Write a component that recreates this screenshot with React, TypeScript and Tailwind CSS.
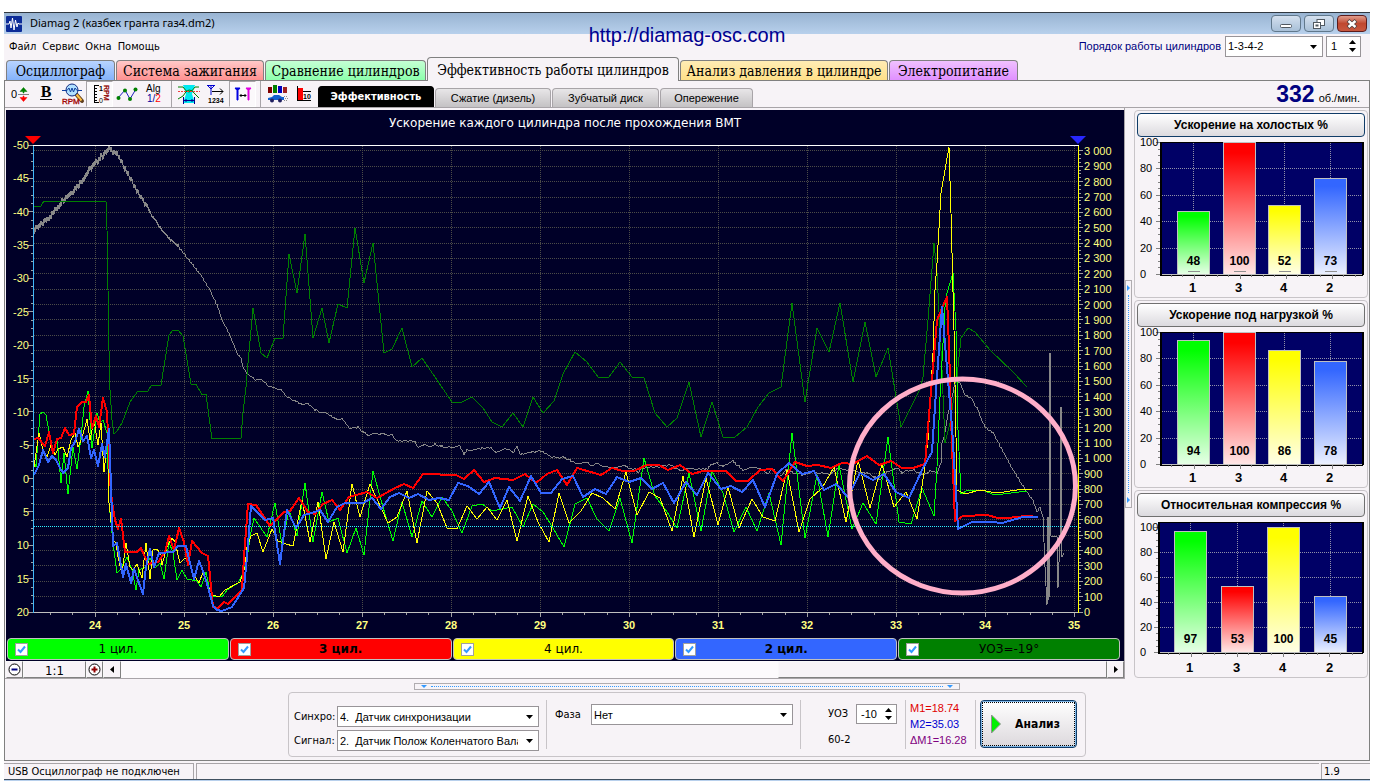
import { useState, type ReactNode } from 'react';
import clsx from 'clsx';

const X0 = 95.5;
const X_STEP = 89.05;
const Y_ZERO = 612.5;
const RPM_STEP = 15.37;

const RPM_TRACE =
  '33,232 43,223 53,213 63,200 77,187 88,172 100,158 110,149 117,155 127,173 137,192 147,208 160,228 170,240 180,248 184,254 193,265 200,274 209,288 218,307 222,320 230,335 237,353 241,358 243,368 248,374 255,379 263,380 267,385 273,387 281,390 287,397 295,400 300,404 308,403 315,410 327,413 337,419 342,418 349,428 358,427 363,432 368,435 373,433 392,435 395,440 415,441 418,447 427,444 432,447 435,444 440,446 452,447 460,446 464,454 467,450 490,447 496,452 508,448 513,452 517,447 520,454 533,452 540,451 553,457 563,457 578,464 588,462 592,466 596,462 602,466 613,468 625,466 635,469 638,473 642,468 660,466 670,465 682,471 687,468 707,469 710,465 717,463 723,466 733,461 743,470 752,467 762,469 767,474 772,468 780,477 787,469 795,473 803,475 813,471 818,473 830,474 838,468 847,470 867,473 880,480 887,472 897,468 902,473 907,470 913,470 925,475 930,470 937,473 941,462 942,443 945,433 948,413 950,407 955,382 960,383 965,395 970,397 977,408 985,427 993,433 1002,450 1013,470 1027,492 1033,500 1037,512 1040,507 1043,517';

const RPM_SPIKES =
  '1043,517 1045,567 1047,605 1048,517 1049,600 1050,353 1051,536 1057,536 1058,588 1060,537 1061,407 1062,557 1064,553';

const SERIES = [
  {
    id: 'uoz',
    color: '#008000',
    width: 1,
    points:
      '33,206 41,206 44,201 100,201 106,202 107,230 108,290 109,350 110,390 112,420 114,434 117,431 122,423 130,402 138,391 148,391 151,386 161,385 169,335 173,330 178,330 183,336 191,384 196,384 202,395 206,394 212,439 241,438 243,413 246,387 248,363 253,308 261,353 267,358 275,338 283,338 289,254 297,293 305,234 313,338 322,308 329,343 338,304 347,308 355,228 364,283 373,243 384,353 392,349 402,328 412,367 422,358 452,402 462,402 472,397 483,408 492,422 502,427 513,413 523,427 533,397 543,413 554,401 563,374 575,352 587,362 598,377 609,377 620,362 632,377 644,378 655,413 667,427 677,418 689,382 701,437 712,402 723,437 735,437 747,427 758,407 769,393 781,387 792,303 805,402 817,328 829,352 840,303 853,382 865,322 876,377 888,348 901,427 920,389 923,377 928,320 934,243 937,273 942,370 945,443 950,423 957,377 961,338 968,328 975,332 990,350 1013,372 1027,387',
  },
  {
    id: 'c1',
    color: '#00ff00',
    width: 1,
    points:
      '33,457 36,467 40,414 43,412 46,415 51,443 53,453 57,438 61,483 64,453 68,494 73,447 77,469 81,437 84,407 88,391 92,448 97,413 100,423 103,420 107,433 109,503 113,543 117,573 120,570 127,557 132,570 136,590 139,570 145,567 150,558 155,568 160,563 164,579 169,542 173,553 177,580 182,570 187,579 197,581 201,587 206,572 209,587 213,596 222,597 227,590 238,583 242,575 247,560 250,537 254,518 267,537 275,503 282,545 289,510 297,536 305,483 313,542 322,492 329,522 338,518 347,553 356,528 364,555 373,471 383,507 393,541 402,502 412,537 422,501 432,517 442,497 452,511 462,533 472,506 482,504 492,511 512,507 523,527 533,504 543,512 553,528 564,547 575,504 587,498 597,519 609,531 620,498 632,543 644,458 655,496 667,512 677,528 689,473 701,531 712,471 723,493 734,532 746,507 757,531 769,493 781,545 792,433 805,538 817,475 828,537 839,465 852,529 863,503 876,524 888,437 899,522 911,524 922,488 934,516 937,467 940,397 945,307 947,293 953,273 956,330 958,430 961,494 968,490 982,490 995,495 1027,491',
  },
  {
    id: 'c4',
    color: '#ffff00',
    width: 1,
    points:
      '34,467 39,433 43,450 47,457 51,445 55,455 58,449 63,447 67,457 71,440 75,433 78,447 82,438 87,419 90,440 94,420 98,445 101,423 104,472 108,437 109,503 113,540 116,543 118,557 122,574 126,543 130,567 133,570 137,564 142,578 146,543 150,579 153,550 157,549 161,555 162,565 167,547 172,538 175,542 180,563 185,558 189,562 193,573 199,583 203,572 208,587 213,595 219,597 225,590 240,582 245,567 247,547 251,536 257,533 263,552 272,529 278,541 286,544 293,546 302,500 310,542 318,502 326,559 334,522 343,552 352,484 360,517 370,484 388,523 397,517 407,491 417,543 427,491 437,503 447,528 457,529 467,506 477,519 487,507 497,520 507,500 517,541 528,496 538,522 549,542 559,493 569,523 581,511 592,493 603,498 615,509 626,472 637,515 649,492 660,498 672,531 683,476 694,537 706,478 718,525 728,487 739,528 752,499 763,517 775,521 787,470 799,532 810,499 822,488 834,467 846,522 858,460 870,508 882,464 894,507 906,492 917,519 924,473 928,440 933,353 935,290 937,263 941,193 949,147 951,213 954,330 957,490 965,494 980,490 997,493 1017,490 1032,489',
  },
  {
    id: 'c3',
    color: '#ff0000',
    width: 2,
    points:
      '34,439 38,438 45,446 49,432 53,453 57,439 61,438 65,428 69,435 74,434 77,407 82,402 86,402 89,395 92,428 96,416 99,427 103,398 107,412 110,480 112,502 115,520 118,529 121,519 125,552 137,552 141,548 148,564 158,562 165,552 169,536 174,550 179,528 184,542 188,565 192,541 202,553 208,556 213,607 218,608 224,602 228,604 242,590 244,557 248,504 256,505 270,526 284,512 290,511 299,498 308,512 315,514 323,504 332,500 340,510 349,497 367,492 377,498 395,488 404,484 413,488 423,474 456,475 464,479 474,470 484,482 495,478 513,480 525,474 536,483 547,474 557,470 567,485 577,468 601,475 612,468 623,471 634,471 647,465 659,465 668,470 680,465 692,474 703,471 726,471 736,481 748,481 760,470 772,469 783,481 795,462 807,466 818,465 831,468 842,463 853,464 867,456 879,465 891,461 902,468 913,468 925,464 928,427 932,380 937,320 947,297 949,347 952,447 955,521 963,516 987,515 998,518 1008,518 1025,516 1033,516',
  },
  {
    id: 'c2',
    color: '#3366ff',
    width: 2,
    points:
      '34,475 39,465 43,450 48,462 52,456 56,460 60,468 63,473 68,468 71,448 75,442 79,429 83,441 87,436 91,458 94,450 98,466 102,444 105,457 109,429 111,487 113,546 117,543 123,577 126,564 131,583 134,569 143,594 146,567 150,549 154,567 159,553 173,552 178,546 186,546 190,563 194,579 199,561 203,571 208,587 213,606 217,610 222,611 232,607 244,588 247,557 251,506 257,512 265,520 273,518 280,564 287,510 296,528 304,515 312,513 320,510 328,522 337,507 345,503 363,503 372,498 381,509 390,497 399,493 409,498 418,494 429,500 439,498 449,500 458,483 468,486 479,494 489,482 500,508 509,487 520,501 531,476 541,493 551,493 562,479 573,476 583,497 595,489 606,494 617,477 629,482 641,478 652,489 663,483 674,503 686,482 697,495 708,473 721,489 731,486 742,492 753,480 765,507 777,474 789,463 802,474 814,471 824,490 836,484 848,497 860,473 873,480 884,474 896,492 909,498 923,468 932,452 937,377 942,307 948,380 952,427 956,493 958,529 972,522 992,522 1002,523 1023,517 1038,517',
  },
];

const LEGEND = [
  { id: 'c1', label: '1 цил.', className: 'bg-[#00ff00]' },
  { id: 'c3', label: '3 цил.', className: 'bg-[#ff0000] font-bold' },
  { id: 'c4', label: '4 цил.', className: 'bg-[#ffff00]' },
  { id: 'c2', label: '2 цил.', className: 'bg-[#3366ff] font-bold' },
  { id: 'uoz', label: 'УОЗ=-19°', className: 'bg-[#008000]' },
];

const TABS = [
  { label: 'Осциллограф', className: 'w-[109px] from-[#b8d4ff] to-[#84b2fa]' },
  { label: 'Система зажигания', className: 'w-[148px] from-[#ffc8c8] to-[#ff9090]' },
  { label: 'Сравнение цилиндров', className: 'w-[161px] from-[#c4ffd4] to-[#8cffac]' },
  { label: 'Эффективность работы цилиндров', className: 'w-[252px]' },
  { label: 'Анализ давления в цилиндре', className: 'w-[208px] from-[#ffecb4] to-[#ffe088]' },
  { label: 'Электропитание', className: 'w-[129px] from-[#f0c0ff] to-[#e090ff]' },
];

const MODES = [
  { label: 'Эффективность', className: 'w-[116px]' },
  { label: 'Сжатие (дизель)', className: 'w-[116px]' },
  { label: 'Зубчатый диск', className: 'w-[107px]' },
  { label: 'Опережение', className: 'w-[93px]' },
];

const GAUGES = [
  { title: 'Ускорение на холостых %', values: [48, 100, 52, 73], left: 23, top: 5, hundred: 5, zero: 137, centers: [56.5, 102.5, 147.5, 193.5], marks: true },
  { title: 'Ускорение под нагрузкой %', values: [94, 100, 86, 78], left: 23, top: 5, hundred: 5, zero: 137, centers: [56.5, 102.5, 147.5, 193.5], marks: false },
  { title: 'Относительная компрессия %', values: [97, 53, 100, 45], left: 21, top: 5, hundred: 10, zero: 135, centers: [53.5, 100.5, 146.5, 193.5], marks: false },
];

const CYLINDERS = ['1', '3', '4', '2'];
const BAR_COLORS = ['#00ff00', '#ff0000', '#ffff00', '#3366ff'];

// The tachometer signal is noisy at high speed and calms down as rpm falls
function roughen(trace: string) {
  const pts = trace.split(' ').map(p => p.split(',').map(Number));
  const out: string[] = [];
  for (let i = 0; i < pts.length - 1; i++) {
    const [xa, ya] = pts[i];
    const [xb, yb] = pts[i + 1];
    for (let x = xa; x < xb; x++) {
      const y = ya + ((yb - ya) * (x - xa)) / (xb - xa);
      const noise = Math.sin(x * 12.9898) * 43758.5453;
      const unit = noise - Math.floor(noise);
      if (x < 180) {
        const amp = x < 150 ? 4 : 2;
        out.push(`${x},${Math.round(y - unit * amp)}`, `${x},${Math.round(y + (1 - unit) * amp)}`);
      } else {
        out.push(`${x},${Math.round(y + (unit - 0.5) * 2)}`);
      }
    }
  }
  out.push(pts[pts.length - 1].join(','));
  return out.join(' ');
}

const RPM_POINTS = roughen(RPM_TRACE);

function range(from: number, to: number) {
  return Array.from({ length: to - from + 1 }, (_, i) => from + i);
}

function formatRpm(v: number) {
  return v >= 1000 ? `${Math.floor(v / 1000)} ${String(v % 1000).padStart(3, '0')}` : String(v);
}

function MainChart({ hidden }: { hidden: string[] }) {
  return (
    <svg viewBox="6 110 1118 527" className="block h-auto w-full bg-[#000028] font-['Liberation_Sans',sans-serif]">
      <text x="565" y="127" textAnchor="middle" fontSize="12" fill="#fff" className="font-['DejaVu_Sans',sans-serif]">
        Ускорение каждого цилиндра после прохождения ВМТ
      </text>
      <g stroke="#4c4c48" strokeDasharray="1 1" shapeRendering="crispEdges">
        {range(1, 30).map(i => (
          <path key={i} d={`M34 ${Math.round(Y_ZERO - i * RPM_STEP) - 0.5}H1078`} />
        ))}
        {range(0, 11).map(i => (
          <path key={i} d={`M${Math.round(X0 + i * X_STEP) - 0.5} 146V612`} />
        ))}
      </g>
      <g shapeRendering="crispEdges" stroke="#a0a0a0">
        {range(0, 56).map(i => (
          <path key={i} d={`M${i % 4 === 0 ? 28 : 31} ${Math.round(145.5 + i * 8.34) - 0.5}H33`} />
        ))}
        {range(-2, 44).map(i => (
          <path key={i} d={`M${Math.round(X0 + (i * X_STEP) / 4) - 0.5} 612v${i % 4 === 0 ? 5 : 3}`} />
        ))}
        {range(0, 120).map(i => (
          <path key={i} d={`M1079 ${Math.round(Y_ZERO - (i * RPM_STEP) / 4) - 0.5}h${i % 4 === 0 ? 4 : 2}`} />
        ))}
      </g>
      <g fill="none" shapeRendering="crispEdges" strokeLinejoin="round">
        <polyline points={RPM_POINTS} stroke="#888" />
        <polyline points={RPM_SPIKES} stroke="#888" strokeLinejoin="bevel" />
        {SERIES.filter(s => !hidden.includes(s.id)).map(s => (
          <polyline key={s.id} points={s.points} stroke={s.color} strokeWidth={s.width} />
        ))}
        <path d="M34 526.5H1078" stroke="#30f0ff" strokeDasharray="1 1" />
        <path d="M33 145.5H1079" stroke="#fff" />
        <path d="M33 612.5H1079" stroke="#c0c0c0" />
        <path d="M33.5 146V613" stroke="#40b8f8" />
        <path d="M1078.5 146V613" stroke="#ffff00" />
      </g>
      <ellipse cx="962.5" cy="486" rx="113" ry="107" fill="none" stroke="#ffaec9" strokeWidth="5" />
      <path d="M25 136H41L33 144Z" fill="#f00" />
      <path d="M1070 136H1086L1078 144Z" fill="#2828ff" />
      <g fontSize="11" fill="#ffff80">
        {range(0, 14).map(i => (
          <text key={i} x="29" y={149 + Math.round(i * 33.36)} textAnchor="end">{i * 5 - 50}</text>
        ))}
        {range(0, 30).map(i => (
          <text key={i} x="1084" y={616 - Math.round(i * RPM_STEP)}>{formatRpm(i * 100)}</text>
        ))}
      </g>
      <g fontSize="11" fontWeight="bold" fill="#ffff80" textAnchor="middle">
        {range(24, 35).map(v => (
          <text key={v} x={Math.round(X0 - 1 + (v - 24) * X_STEP)} y="629">{v}</text>
        ))}
      </g>
    </svg>
  );
}

function Gauge({ title, values, left, top, hundred, zero, centers, marks, index }: (typeof GAUGES)[number] & { index: number }) {
  const scale = (zero - hundred) / 100;
  return (
    <section className="rounded border border-[#c8c4c8] px-0.5 pt-0.5">
      <button
        className={clsx(
          "block h-6 w-full rounded-sm border bg-linear-to-b from-white to-[#dcdadf] text-center font-['Liberation_Sans',sans-serif] text-xs font-bold",
          index === 0 ? 'border-[#103c68]' : 'border-[#707070]',
        )}
      >
        {title}
      </button>
      <svg viewBox="0 0 228 160" className="block h-auto w-full font-['Liberation_Sans',sans-serif]">
        <defs>
          {BAR_COLORS.map((c, i) => (
            <linearGradient key={c} id={`bar-${index}-${i}`} x1="0" x2="0" y1="0" y2="1">
              <stop offset="0.08" stopColor={c} />
              <stop offset="1" stopColor={c} stopOpacity="0.1" />
            </linearGradient>
          ))}
        </defs>
        <g shapeRendering="crispEdges">
          <rect x={left + 1} y={top + 0.5} width={225 - left} height={zero - top} fill="#000066" stroke="#000" strokeWidth="1" />
          <path d={`M${left + 1} ${top}V${zero + 1}M225.5 ${top}V${zero + 1}`} stroke="#000" strokeWidth="2" />
          <path d={`M${left} ${zero + 1}H226`} stroke="#000" strokeWidth="1" />
          <g stroke="#9090a8" strokeDasharray="1 1">
            {[20, 40, 60, 80].map(v => (
              <path key={v} d={`M${left + 2} ${Math.round(zero - v * scale) + 0.5}H225`} />
            ))}
            {centers.map(c => (
              <path key={c} d={`M${c} ${top + 1}V${zero}`} />
            ))}
          </g>
          <g stroke="#808080">
            {range(0, 20).map(i => (
              <path key={i} d={`M${left - (i % 4 === 0 ? 4 : 2)} ${Math.round(zero - i * 5 * scale) + 0.5}H${left}`} />
            ))}
            {range(-2, 14).map(i => (
              <path key={i} d={`M${Math.round(centers[0] + i * 11.5) + 0.5} ${zero + 1}v${i >= 0 && i % 4 === 0 ? 4 : 2}`} />
            ))}
          </g>
          {values.map((v, i) => (
            <g key={i}>
              <rect x={centers[i] - 16} y={Math.round(zero - v * scale)} width="32" height={zero - Math.round(zero - v * scale)} fill="#fff" />
              <rect
                x={centers[i] - 16}
                y={Math.round(zero - v * scale) + 0.5}
                width="32"
                height={zero - Math.round(zero - v * scale) - 0.5}
                fill={`url(#bar-${index}-${i})`}
                stroke="#c0c0c0"
              />
              {marks && <path d={`M${centers[i] - 6} ${zero - 2.5}h12`} stroke="#909090" />}
            </g>
          ))}
          <path d={`M${left + 2} ${zero + 0.5}H225`} stroke="#c0c0c0" />
        </g>
        <g fontSize="11">
          {[0, 20, 40, 60, 80, 100].map(v => (
            <text key={v} x="3" y={Math.round(zero - v * scale) + 4}>{v}</text>
          ))}
        </g>
        <g fontSize="12" fontWeight="bold" textAnchor="middle">
          {values.map((v, i) => (
            <text key={i} x={centers[i]} y={zero - 9}>{v}</text>
          ))}
        </g>
        <g fontSize="13" fontWeight="bold" textAnchor="middle">
          {CYLINDERS.map((v, i) => (
            <text key={v} x={centers[i] - 1} y="155">{v}</text>
          ))}
        </g>
      </svg>
    </section>
  );
}

function ToolButton({ label, pressed, children }: { label: string; pressed?: boolean; children: ReactNode }) {
  return (
    <button
      aria-label={label}
      className={clsx('flex h-[26px] w-[27px] items-center justify-center', pressed && 'border border-white border-t-[#a8a4a8] border-l-[#a8a4a8] bg-[#fbf9fb]')}
    >
      <svg width="24" height="22" viewBox="0 0 24 22" className="shrink-0 font-['Liberation_Sans',sans-serif]">
        {children}
      </svg>
    </button>
  );
}

function ToolSeparator() {
  return <div className="mr-[3px] ml-1 h-[26px] w-px bg-[#a8a4a8]" />;
}

function Toolbar() {
  return (
    <div className="flex items-center">
      <ToolButton label="Сдвиг нуля">
        <text x="4" y="15" fontSize="11">0</text>
        <path d="M11 11.5H22" stroke="#808080" />
        <path d="M16.500 4.500L13 8.500H16V10H17V8.500H20Z" fill="#008000" stroke="#008000" strokeWidth="0.500" />
        <path d="M16.500 18.500L13 14.500H16V13H17V14.500H20Z" fill="#f00" stroke="#f00" strokeWidth="0.500" />
      </ToolButton>
      <ToolButton label="Жирные линии">
        <text x="12" y="14" fontSize="16" fontWeight="bold" textAnchor="middle" className="font-['Liberation_Serif',serif]">B</text>
        <path d="M6 16.500H18" stroke="#000" shapeRendering="crispEdges" />
      </ToolButton>
      <ToolButton label="Обороты">
        <path d="M15 11L21 18" stroke="#604020" strokeWidth="4" strokeLinecap="round" />
        <path d="M15.500 11.500L20.500 17.500" stroke="#ffc040" strokeWidth="2" />
        <circle cx="11" cy="7" r="6" fill="#b0e0ff" stroke="#102880" />
        <path d="M1 7.500H6L8 5L9.500 9L11 5L12.500 9L14 5L16 7.500H21" fill="none" stroke="#1040a0" />
        <text x="1" y="21" fontSize="8" fill="#a00000" stroke="#a00000" strokeWidth="0.300">RPM</text>
      </ToolButton>
      <ToolButton label="Шкала оборотов" pressed>
        <path d="M11 2.500H6.500V19.500H11" fill="none" stroke="#000" shapeRendering="crispEdges" />
        <path d="M7 5.500H9M7 8.500H9M7 11.500H9M7 14.500H9M7 17.500H9" stroke="#000" shapeRendering="crispEdges" />
        <text x="11" y="8" fontSize="7" fontWeight="bold">1</text>
        <text x="11" y="20" fontSize="7">0</text>
        <text transform="translate(16 2) rotate(90)" fontSize="7" fill="#900000" stroke="#900000" strokeWidth="0.300">RPM</text>
      </ToolButton>
      <ToolButton label="Точки">
        <path d="M3 15L10 7L15 16L21 6" fill="none" stroke="#2020c0" />
        <g fill="#008000">
          <circle cx="3.500" cy="15" r="2" />
          <circle cx="10" cy="7.500" r="2" />
          <circle cx="15" cy="16" r="2" />
          <circle cx="20.500" cy="6.500" r="2" />
        </g>
      </ToolButton>
      <ToolButton label="Алгоритм">
        <text x="4" y="9" fontSize="10">Alg</text>
        <text x="5" y="19" fontSize="10">
          <tspan fill="#0000a0">1/</tspan>
          <tspan fill="#f00">2</tspan>
        </text>
      </ToolButton>
      <ToolSeparator />
      <ToolButton label="Сравнение окна">
        <path d="M6 2H18L15 11L18 20H6L9 11Z" fill="#00e8f0" />
        <path d="M1 4H6Q12 14 18 4H22M1 16L6 13Q12 2 18 11L22 15" fill="none" stroke="#008000" />
        <path d="M1 8.500H23" stroke="#f04040" strokeDasharray="2 1" />
        <path d="M6.500 14V21M17.500 14V21M7 17.500H17M9 16V19M15 16V19" stroke="#000090" fill="none" />
      </ToolButton>
      <ToolButton label="Порядок меток">
        <path d="M3 2.500H11M7 3V12M4 3L7 6L10 3" fill="none" stroke="#0000d0" />
        <path d="M8 8.500H19M16 5.500L19 8.500L16 11.500" fill="none" stroke="#000" />
        <text x="4" y="20" fontSize="7" fontWeight="bold">1234</text>
      </ToolButton>
      <ToolButton label="Маркеры" pressed>
        <path d="M4 5H9L7 7.500V17H6V7.500Z" fill="#0000e0" stroke="#0000e0" />
        <path d="M15 5H20L18 7.500V17H17V7.500Z" fill="#e000e0" stroke="#e000e0" />
        <path d="M9 12.500H15M10.500 11L9 12.500L10.500 14M13.500 11L15 12.500L13.500 14" fill="none" stroke="#000" />
      </ToolButton>
      <ToolSeparator />
      <ToolButton label="Разгон">
        <rect x="2" y="4" width="4" height="6" fill="#800000" />
        <rect x="7" y="2" width="4" height="8" fill="#008000" />
        <rect x="12" y="3" width="4" height="7" fill="#0000c0" />
        <rect x="17" y="4" width="4" height="6" fill="#a02020" />
        <path d="M2 17V15L6 14L8 12H13L16 14H18V17Z" fill="#1060d0" />
        <circle cx="6" cy="17.500" r="2" fill="#202060" />
        <circle cx="14" cy="17.500" r="2" fill="#202060" />
        <path d="M18 13.500H22M19 15.500H23M18 17.500H22" stroke="#909090" strokeDasharray="1 1" />
      </ToolButton>
      <ToolButton label="Порог">
        <path d="M4.500 3V18M4 17.500H18M10 8.500H18" stroke="#000" fill="none" shapeRendering="crispEdges" />
        <rect x="5" y="5" width="5" height="12" fill="#f00" />
        <text x="10" y="16" fontSize="7" fontWeight="bold">10</text>
      </ToolButton>
    </div>
  );
}

function ComboBox({ id, className, options }: { id: string; className: string; options: string[] }) {
  return (
    <div className={clsx('relative', className)}>
      <select
        id={id}
        className="block h-[21px] w-full appearance-none overflow-hidden border border-[#989498] bg-white pr-5 pl-0.5 font-['Liberation_Sans',sans-serif] text-[11px] leading-4 text-clip"
      >
        {options.map(o => (
          <option key={o}>{o}</option>
        ))}
      </select>
      <svg viewBox="0 0 7 4" className="pointer-events-none absolute top-[9px] right-1.5 h-1 w-[7px]">
        <path d="M0 0H7L3.500 4Z" />
      </svg>
    </div>
  );
}

function Spinner({ id, label, initial, className }: { id: string; label?: string; initial: number; className: string }) {
  const [value, setValue] = useState(initial);
  return (
    <div className={clsx('flex items-center border border-[#989498] bg-white pr-1', className)}>
      <input
        id={id}
        aria-label={label}
        value={value}
        onChange={e => setValue(Number(e.target.value) || 0)}
        className="w-full min-w-0 bg-transparent pl-1 font-['Liberation_Sans',sans-serif] text-[11px] leading-4 outline-none"
      />
      <div className="flex flex-col gap-1">
        <button aria-label="Больше" type="button" onClick={() => setValue(value + 1)}>
          <svg viewBox="0 0 7 4" className="block h-1 w-[7px]">
            <path d="M0 4H7L3.500 0Z" />
          </svg>
        </button>
        <button aria-label="Меньше" type="button" onClick={() => setValue(value - 1)}>
          <svg viewBox="0 0 7 4" className="block h-1 w-[7px]">
            <path d="M0 0H7L3.500 4Z" />
          </svg>
        </button>
      </div>
    </div>
  );
}

function TitleBar() {
  const buttonClass = 'flex h-[17px] w-[30px] items-center justify-center rounded-sm border';
  return (
    <header className="flex h-[22px] items-center border-t border-[#303840] bg-linear-to-b from-[#98b4d2] to-[#b8d0ec] pr-[3px] pl-0.5">
      <svg viewBox="0 0 16 16" className="size-4">
        <rect width="16" height="16" rx="1" fill="#0c2c98" />
        <path d="M0 8H3L4 5L5 12L6.500 2L8 14L9.500 4L11 11L12 7L13 8H16" fill="none" stroke="#fff" />
      </svg>
      <h1 className="flex-1 pl-2 font-['Noto_Sans',sans-serif] text-[11px]">Diamag 2 (казбек гранта газ4.dm2)</h1>
      <div className="flex gap-[3px]">
        <button aria-label="Свернуть" className={clsx(buttonClass, 'border-[#60788c] bg-linear-to-b from-[#d4e0ee] to-[#a8c0d8]')}>
          <svg viewBox="0 0 12 10" className="h-2.5 w-3">
            <rect x="0.500" y="5.500" width="11" height="3" rx="1" fill="#fff" stroke="#505860" />
          </svg>
        </button>
        <button aria-label="Восстановить" className={clsx(buttonClass, 'border-[#60788c] bg-linear-to-b from-[#d4e0ee] to-[#a8c0d8]')}>
          <svg viewBox="0 0 12 10" className="h-2.5 w-3" fill="#fff" stroke="#505860">
            <rect x="4" y="0.500" width="7.500" height="6" />
            <rect x="0.500" y="3.500" width="7" height="6" />
            <rect x="3" y="6" width="2" height="1" />
          </svg>
        </button>
        <button aria-label="Закрыть" className={clsx(buttonClass, 'border-[#5c1c1c] bg-linear-to-b from-[#e09c8c] via-[#c04830] to-[#c85840]')}>
          <svg viewBox="0 0 12 10" className="h-2.5 w-3">
            <path d="M2 1.500L10 8.500M10 1.500L2 8.500" stroke="#504040" strokeWidth="4" />
            <path d="M2.500 2L9.500 8M9.500 2L2.500 8" stroke="#fff" strokeWidth="2.400" />
          </svg>
        </button>
      </div>
    </header>
  );
}

function ScrollRow() {
  const bevel = 'border border-[#f8f8f8] border-r-[#808080] border-b-[#808080] bg-[#f7f3f7]';
  return (
    <div className="flex h-[17px] items-stretch bg-white">
      <button aria-label="Уменьшить" className={clsx(bevel, 'flex w-[17px] items-center justify-center')}>
        <svg viewBox="0 0 13 13" className="size-[13px] shrink-0">
          <circle cx="6.500" cy="6.500" r="5.500" fill="#fff" stroke="#000" />
          <path d="M3.500 6.500H9.500" stroke="#000080" strokeWidth="2" />
        </svg>
      </button>
      <span className={clsx(bevel, "w-[63px] text-center font-['DejaVu_Sans_Condensed','DejaVu_Sans',sans-serif] text-[13px] leading-[18px]")}>1:1</span>
      <button aria-label="Увеличить" className={clsx(bevel, 'flex w-[17px] items-center justify-center')}>
        <svg viewBox="0 0 13 13" className="size-[13px] shrink-0">
          <circle cx="6.500" cy="6.500" r="5.500" fill="#fff" stroke="#000" />
          <path d="M3.500 6.500H9.500M6.500 3.500V9.500" stroke="#900000" strokeWidth="2" />
        </svg>
      </button>
      <button aria-label="Влево" className={clsx(bevel, 'flex w-[18px] items-center justify-center')}>
        <svg viewBox="0 0 4 7" className="h-[7px] w-1">
          <path d="M4 0V7L0 3.500Z" />
        </svg>
      </button>
      <div className="flex flex-1 justify-end bg-[#fcfafc]">
        <div className={clsx(bevel, 'w-1/3')} />
      </div>
      <button aria-label="Вправо" className={clsx(bevel, 'flex w-[17px] items-center justify-center')}>
        <svg viewBox="0 0 4 7" className="h-[7px] w-1">
          <path d="M0 0V7L4 3.500Z" />
        </svg>
      </button>
    </div>
  );
}

export default function App() {
  const [tab, setTab] = useState(3);
  const [mode, setMode] = useState(0);
  const [hidden, setHidden] = useState<string[]>([]);

  const toggleSeries = (id: string) => {
    setHidden(hidden.includes(id) ? hidden.filter(h => h !== id) : [...hidden, id]);
  };

  const uiFont = "font-['DejaVu_Sans_Condensed','DejaVu_Sans',sans-serif] text-[11px] leading-4";

  return (
    <div className="bg-white pt-3 pr-3 pl-1 text-black">
      <div className="relative bg-[#f7f3f7]">
        <TitleBar />
        <a
          href="http://diamag-osc.com"
          className="absolute top-[9px] left-1/2 -translate-x-1/2 font-['Liberation_Sans',sans-serif] text-xl leading-7 text-[#000090]"
        >
          http://diamag-osc.com
        </a>

        <div className={clsx('flex h-6 items-center', uiFont)}>
          <nav className="flex flex-1 gap-1.5 pt-0.5 pl-[5px]">
            <button>Файл</button>
            <button>Сервис</button>
            <button>Окна</button>
            <button>Помощь</button>
          </nav>
          <label htmlFor="firing-order" className="pr-1 font-['Liberation_Sans',sans-serif] text-[#000080]">
            Порядок работы цилиндров
          </label>
          <ComboBox id="firing-order" className="w-[98px]" options={['1-3-4-2', '1-2-4-3']} />
          <Spinner id="first-cylinder" label="Первый цилиндр" initial={1} className="mr-[9px] ml-[3px] h-[21px] w-[35px]" />
        </div>

        <div className="flex h-[23px] items-end border-b border-[#808080] pl-0.5">
          {TABS.map((t, i) => (
            <button
              key={t.label}
              onClick={() => setTab(i)}
              className={clsx(
                "mr-px rounded-t border border-b-0 border-[#808080] font-['DejaVu_Serif_Condensed','DejaVu_Serif',serif] text-sm leading-[18px] whitespace-nowrap",
                t.className,
                tab === i ? '-mb-px h-6 bg-[#f7f3f7]' : 'h-5 bg-linear-to-b',
              )}
            >
              {t.label}
            </button>
          ))}
        </div>

        <main className="border-x border-b border-[#808080]">
          <div className="flex h-[27px] items-end border-b border-[#a8a4a8]">
            <Toolbar />
            <div className="flex flex-1 items-end gap-px">
              {MODES.map((m, i) => (
                <button
                  key={m.label}
                  onClick={() => setMode(i)}
                  className={clsx(
                    'rounded-t-sm border border-b-0 text-[11px] whitespace-nowrap',
                    m.className,
                    mode === i
                      ? "h-[21px] border-black bg-black font-['DejaVu_Sans_Condensed','DejaVu_Sans',sans-serif] font-bold text-white"
                      : "h-[19px] border-[#a8a4a8] bg-linear-to-b from-[#e8e6e8] to-[#c4c2c4] font-['Liberation_Sans',sans-serif]",
                  )}
                >
                  {m.label}
                </button>
              ))}
            </div>
            <p className="flex items-baseline gap-1 pr-[9px] font-['Liberation_Sans',sans-serif] leading-[18px]">
              <strong className="text-[23px]/[18px] text-[#000080]">332</strong>
              <span className="text-[11px]/[18px]">об./мин.</span>
            </p>
          </div>

          <div className="flex">
            <div className="min-w-0 flex-1 border-r border-b border-[#a8a4a8] pt-0.5 pl-px">
              <MainChart hidden={hidden} />
              <div className="grid grid-cols-5 bg-[#000028] pt-px pr-1 pb-px font-['DejaVu_Sans',sans-serif] text-xs">
                {LEGEND.map(l => (
                  <label key={l.id} className={clsx('relative ml-px flex h-[22px] items-center justify-center rounded-sm border border-[#c0c0c0]', l.className)}>
                    <input
                      type="checkbox"
                      checked={!hidden.includes(l.id)}
                      onChange={() => toggleSeries(l.id)}
                      className="peer absolute left-[7px] size-[13px] appearance-none border border-[#a0a0a0] bg-white"
                    />
                    <svg viewBox="0 0 13 13" className="pointer-events-none invisible absolute left-[7px] size-[13px] peer-checked:visible">
                      <path d="M3 6.500L5.500 9L10 3.500" fill="none" stroke="#3399ff" strokeWidth="2" />
                    </svg>
                    {l.label}
                  </label>
                ))}
              </div>
              <ScrollRow />
            </div>

            <div className="flex w-[7px] items-center">
              <div className="flex h-[228px] w-full flex-col items-center justify-between border border-[#b0acb0] py-1">
                <svg viewBox="0 0 3 6" className="h-1.5 w-[3px]">
                  <path d="M0 0V6L3 3Z" fill="#3399ff" />
                </svg>
                <div className="my-1 flex-1 border-l border-dotted border-[#3399ff]" />
                <svg viewBox="0 0 3 6" className="h-1.5 w-[3px]">
                  <path d="M0 0V6L3 3Z" fill="#3399ff" />
                </svg>
              </div>
            </div>

            <aside className="flex w-[237px] flex-col gap-0.5 pt-0.5 pr-px pl-0.5">
              {GAUGES.map((g, i) => (
                <Gauge key={g.title} index={i} {...g} />
              ))}
            </aside>
          </div>

          <div className="mx-auto mt-1 flex h-[7px] w-[546px] items-center gap-1 border border-[#b0acb0] px-1.5">
            <svg viewBox="0 0 6 3" className="h-[3px] w-1.5">
              <path d="M0 0H6L3 3Z" fill="#3399ff" />
            </svg>
            <div className="flex-1 border-t border-dotted border-[#3399ff]" />
            <svg viewBox="0 0 6 3" className="h-[3px] w-1.5">
              <path d="M0 0H6L3 3Z" fill="#3399ff" />
            </svg>
          </div>

          <form
            onSubmit={e => e.preventDefault()}
            className={clsx('mx-auto mt-0.5 mb-[3px] flex h-[65px] w-[798px] items-start rounded border border-[#c8c4c8] pt-[7px] pr-2 pl-[5px]', uiFont)}
          >
            <div className="mt-1.5 grid w-[245px] grid-cols-[43px_202px] items-center gap-y-[3px]">
              <label htmlFor="sync">Синхро:</label>
              <ComboBox id="sync" className="w-full" options={['4.\u00a0 Датчик синхронизации']} />
              <label htmlFor="signal">Сигнал:</label>
              <ComboBox id="signal" className="w-full" options={['2.\u00a0 Датчик Полож Коленчатого Вала']} />
            </div>
            <div className="mr-2 ml-[7px] h-[49px] w-px bg-[#c8c4c8]" />
            <div className="mt-1 flex items-center">
              <label htmlFor="phase" className="w-9">Фаза</label>
              <ComboBox id="phase" className="w-[202px]" options={['Нет']} />
            </div>
            <div className="ml-[7px] h-[49px] w-px bg-[#c8c4c8]" />
            <div className="mt-1 ml-[27px] w-[69px]">
              <div className="flex items-center">
                <label htmlFor="uoz" className="w-7">УОЗ</label>
                <Spinner id="uoz" initial={-10} className="h-5 w-[41px]" />
              </div>
              <p className="mt-2">60-2</p>
            </div>
            <div className="ml-2 h-[49px] w-px bg-[#c8c4c8]" />
            <div className="w-[69px] pl-1 font-['Liberation_Sans',sans-serif]">
              <p className="text-[#e00000]">M1=18.74</p>
              <p className="text-[#0000d0]">M2=35.03</p>
              <p className="text-[#800080]">ΔM1=16.28</p>
            </div>
            <div className="mr-1 h-[49px] w-px bg-[#c8c4c8]" />
            <button className="h-12 w-[97px] rounded-sm border border-[#103c68] bg-linear-to-b from-white to-[#dcd8dc] p-px ring-1 ring-[#80b8e8] ring-inset">
              <span className="flex h-full items-center border border-dotted border-black pl-2">
                <svg viewBox="0 0 10 20" className="h-5 w-2.5">
                  <path d="M0.500 1V19L9.500 10Z" fill="#00f000" stroke="#909090" />
                </svg>
                <span className="flex-1 text-center font-['DejaVu_Sans_Condensed','DejaVu_Sans',sans-serif] text-xs font-bold">Анализ</span>
              </span>
            </button>
          </form>
        </main>

        <footer className={clsx('mt-0.5 flex h-4 gap-0.5', uiFont)}>
          <p className="w-[190px] border-t border-r border-[#a8a4a8] pl-1 leading-[15px] whitespace-nowrap">USB Осциллограф не подключен</p>
          <p className="flex-1 border-t border-l border-[#a8a4a8]" />
          <p className="w-[49px] border-t border-l border-[#a8a4a8] pl-0.5 leading-[15px]">1.9</p>
        </footer>
        <div className="h-0.5 border-t border-[#405060] bg-[#b8d0ec]" />
      </div>
    </div>
  );
}
